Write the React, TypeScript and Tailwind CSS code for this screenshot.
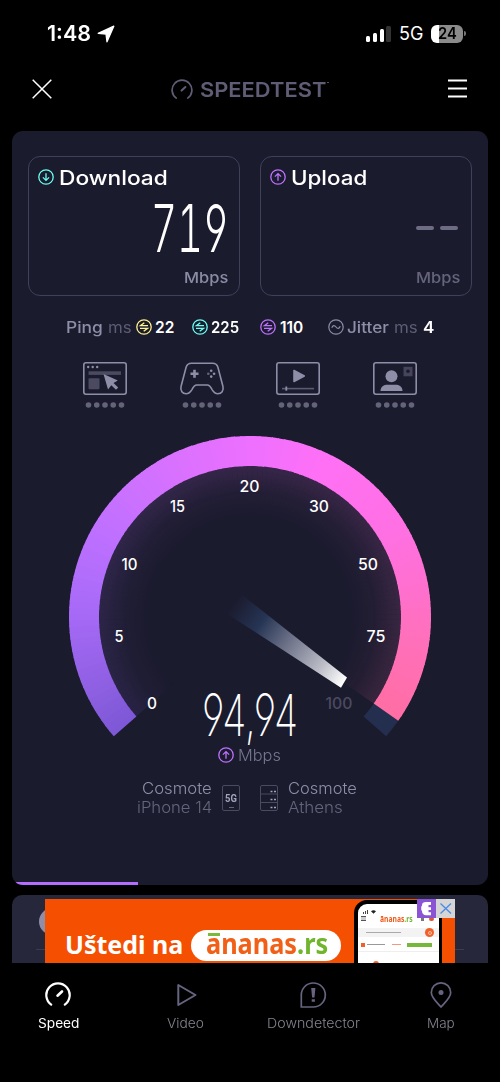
import { useLayoutEffect, useRef, type ReactNode } from "react";

/* Text stretched horizontally so that it fills the width given in className. */
function Fit({ className, children }: { className: string; children: ReactNode }) {
  const box = useRef<HTMLSpanElement>(null);
  const inner = useRef<HTMLSpanElement>(null);
  useLayoutEffect(() => {
    if (!box.current || !inner.current) return;
    const k = box.current.clientWidth / inner.current.offsetWidth;
    inner.current.style.transform = `scaleX(${k})`;
  }, [children]);
  return (
    <span className={`block shrink-0 whitespace-nowrap ${className}`}>
      <span ref={box} className="block w-full">
        <span ref={inner} className="inline-block origin-left">
          {children}
        </span>
      </span>
    </span>
  );
}

function ArrowCircle({ up, className }: { up?: boolean; className: string }) {
  return (
    <svg viewBox="0 0 16 16" fill="none" stroke="currentColor" strokeWidth="1.3" className={`size-4 shrink-0 ${className}`}>
      <circle cx="8" cy="8" r="7.2" />
      <path d={up ? "M8 11.8V4.8M4.9 7.6 8 4.6l3.1 3" : "M8 4.2v7M4.9 8.4 8 11.4l3.1-3"} />
    </svg>
  );
}

function PingIcon({ className }: { className: string }) {
  return (
    <svg viewBox="0 0 16 16" fill="none" stroke="currentColor" strokeWidth="1.3" className={`size-4 shrink-0 ${className}`}>
      <circle cx="8" cy="8" r="7.2" />
      <path d="M12 6.7H4.4L8.3 3.7M4 9.3h7.6L7.7 12.3" />
    </svg>
  );
}

function Dots() {
  return (
    <svg viewBox="0 0 40 6" className="mt-[7.500px] h-[6px] w-[40px]" fill="#646379">
      {[0, 1, 2, 3, 4].map((i) => (
        <circle key={i} cx={3.5 + i * 8.25} cy="3" r="2.8" />
      ))}
    </svg>
  );
}

const experiences: ReactNode[] = [
  <g key="web">
    <rect x="0.8" y="0.8" width="42.4" height="31.4" rx="2.2" />
    <g fill="#8f8ea8" stroke="none">
      <circle cx="5.2" cy="5" r="1.2" />
      <circle cx="9.7" cy="5" r="1.2" />
      <circle cx="14.2" cy="5" r="1.2" />
      <rect x="5.5" y="9.3" width="32.5" height="3.6" fill="#4b4a60" />
      <rect x="5.5" y="16.3" width="11" height="11" rx="1" fill="#4b4a60" />
      <path d="M20.5 12 25 27.500l3.300-4.200 4.700 4.500 2.200-2.200-4.700-4.600 4.300-2.600z" />
    </g>
  </g>,
  <g key="games">
    <path d="M11.5 1.2h21c3 0 4.7 1.5 5.4 4l5 19c1.2 4.5-1.5 7.600-5 7.600-3 0-4.500-2-6-4.500-1.300-2.300-2-4.300-4.500-4.300H16.600c-2.500 0-3.200 2-4.500 4.300-1.500 2.500-3 4.500-6 4.500-3.500 0-6.200-3.100-5-7.600l5-19c.7-2.500 2.400-4 5.400-4z" />
    <path d="M14.500 7.800v8M10.500 11.800h8" strokeWidth="2.600" />
    <g fill="#8f8ea8" stroke="none">
      <circle cx="31.200" cy="8.800" r="1.300" />
      <circle cx="31.200" cy="14.600" r="1.300" />
      <circle cx="28.300" cy="11.700" r="1.300" fill="#65647b" />
      <circle cx="34.100" cy="11.700" r="1.300" />
    </g>
  </g>,
  <g key="video">
    <rect x="0.8" y="0.8" width="42.400" height="31.400" rx="2.200" />
    <path d="M18 8.500v11l10.300-5.500z" fill="#8f8ea8" />
    <path d="M6 26.600h32" strokeWidth="1.600" stroke="#5c5b72" />
    <path d="M10.300 24.500v4.200" strokeWidth="1.800" />
  </g>,
  <g key="calls">
    <rect x="0.8" y="0.8" width="42.400" height="31.400" rx="2.200" />
    <g fill="#8f8ea8" stroke="none">
      <circle cx="18.500" cy="14.200" r="6" />
      <path d="M7.500 29c0-4.500 3.500-6.300 7-6.300h8c3.500 0 7 1.800 7 6.300z" />
      <rect x="30.500" y="4.800" width="9" height="9.500" fill="#45445a" />
      <circle cx="35" cy="9.300" r="1.800" fill="#1b1b2e" />
    </g>
  </g>,
];

const CX = 250;
const CY = 617;
const START = -131.2;
const END = 125;
const stops: [number, number[]][] = [
  [-131.2, [126, 88, 214]],
  [-110, [148, 98, 230]],
  [-88, [168, 106, 248]],
  [-62, [190, 112, 255]],
  [-35, [211, 113, 255]],
  [0, [238, 112, 255]],
  [25, [255, 112, 245]],
  [60, [255, 112, 226]],
  [92, [255, 112, 192]],
  [125, [255, 110, 162]],
];

function colorAt(a: number) {
  for (let i = 1; i < stops.length; i++) {
    const [a0, c0] = stops[i - 1];
    const [a1, c1] = stops[i];
    if (a <= a1) {
      const t = (a - a0) / (a1 - a0);
      return `rgb(${c0.map((v, k) => Math.round(v + (c1[k] - v) * t)).join(",")})`;
    }
  }
  return "rgb(255,110,162)";
}

function sector(a0: number, a1: number, r0: number, r1: number) {
  const p = (a: number, r: number) => {
    const t = (a * Math.PI) / 180;
    return `${(CX + r * Math.sin(t)).toFixed(2)} ${(CY - r * Math.cos(t)).toFixed(2)}`;
  };
  return `M${p(a0, r1)}A${r1} ${r1} 0 0 1 ${p(a1, r1)}L${p(a1, r0)}A${r0} ${r0} 0 0 0 ${p(a0, r0)}Z`;
}

const COUNT = 128;
const STEP = (END - START) / COUNT;
const slices = Array.from({ length: COUNT }, (_, i) => START + i * STEP);

const ticks: [string, number, number, number][] = [
  ["0", 152, 704, 10],
  ["5", 119, 637, 9],
  ["10", 129.5, 564.5, 16],
  ["15", 177.5, 506.5, 15],
  ["20", 249.5, 487, 20],
  ["30", 319, 506.5, 20],
  ["50", 368, 564.5, 20],
  ["75", 376, 637, 19],
  ["100", 339, 704, 27],
];

function Gauge() {
  return (
    <svg viewBox="50 430 400 315" className="h-[315px] w-[400px] overflow-visible">
      <defs>
        <radialGradient id="fade" gradientUnits="userSpaceOnUse" cx={CX} cy={CY} r="152">
          <stop offset="0.66" stopColor="#fff" stopOpacity="0" />
          <stop offset="0.82" stopColor="#fff" stopOpacity="0.04" />
          <stop offset="1" stopColor="#fff" stopOpacity="0.14" />
        </radialGradient>
        <mask id="glow">
          <rect x="50" y="430" width="400" height="315" fill="url(#fade)" />
        </mask>
        <linearGradient id="needle" gradientUnits="userSpaceOnUse" x1="233" y1="604" x2="344" y2="682">
          <stop offset="0" stopColor="#243353" stopOpacity="0" />
          <stop offset="0.25" stopColor="#263554" />
          <stop offset="0.5" stopColor="#6e7389" />
          <stop offset="0.8" stopColor="#bcbdc7" />
          <stop offset="1" stopColor="#fff" />
        </linearGradient>
      </defs>
      <g mask="url(#glow)">
        {slices.map((a) => (
          <path key={a} d={sector(a, Math.min(a + STEP + 0.1, END), 90, 152)} fill={colorAt(a)} />
        ))}
      </g>
      <path d={sector(124.8, 131.2, 151, 181)} fill="#242e4e" />
      {slices.map((a) => (
        <path key={a} d={sector(a, Math.min(a + STEP + 0.4, END), 151, 181)} fill={colorAt(a)} />
      ))}
      <path d="M241.500 594.500 347 677.500 341 687.700 226.500 613.500z" fill="url(#needle)" />
      <g fontFamily="Inter, 'Liberation Sans', sans-serif" fontSize="15.5" fontWeight="550" textAnchor="middle">
        {ticks.map(([t, x, y, w]) => (
          <text key={t} x={x} y={y + 5.3} textLength={w} lengthAdjust="spacingAndGlyphs" fill={t === "100" ? "#4b4a5f" : "#fff"}>
            {t}
          </text>
        ))}
      </g>
      <text
        x="250"
        y="735.5"
        fontSize="58"
        fontWeight="200"
        textAnchor="middle"
        textLength="96"
        lengthAdjust="spacingAndGlyphs"
        fill="#fff"
        className="font-[Inter,sans-serif] [font-feature-settings:'cv04']"
      >
        94,94
      </text>
    </svg>
  );
}

function SpeedIcon({ className, width }: { className: string; width: number }) {
  return (
    <svg viewBox="0 0 26 26" fill="none" stroke="currentColor" strokeWidth={width} strokeLinecap="round" className={className}>
      <path d="M6.200 22.600A11.700 11.700 0 1 1 19.800 22.600" />
      <path d="M12.500 13.700 17 9.500" strokeWidth={width + 0.4} />
    </svg>
  );
}

function Ad() {
  return (
    <div className="relative h-[68px] overflow-hidden rounded-t-[10px] bg-[#26273b]">
      <div className="absolute top-[13px] left-[27px] size-[27px] rounded-full bg-[#8f8ea6]" />
      <div className="absolute top-[54px] left-[24px] h-px w-[428px] bg-[#3c3c50]" />
      <div className="absolute top-[3.500px] left-[33px] flex h-[65px] w-[410px] overflow-hidden bg-[#f54f02]">
        <Fit className="mt-[29px] ml-[20px] w-[118px] font-['Noto_Sans'] text-[25px] leading-[32px] font-bold text-white">Uštedi na</Fit>
        <div className="mt-[31px] ml-[8px] h-[31.500px] w-[149.500px] rounded-full bg-white pl-[15px]">
          <div className="relative -top-[3px]">
            <Fit className="w-[122px] font-['Noto_Sans'] text-[28px] leading-[32px] font-bold text-[#f26018]">
              ānanas<span className="text-[#70b52c]">.rs</span>
            </Fit>
            <span className="absolute top-[3px] left-px h-[6px] w-[15px] bg-white" />
            <span className="absolute top-[6px] left-[2px] h-[3px] w-[12px] bg-[#7ab93a]" />
          </div>
        </div>
        <div className="mt-[1.500px] ml-[13.500px] h-[90px] w-[88px] rounded-[13px] border-[4px] border-r-[3px] border-black bg-white">
          <div className="mt-[4px] ml-[5px] flex h-[6px] items-end gap-px">
            <i className="h-[2px] w-px bg-[#444]" />
            <i className="h-[3px] w-px bg-[#444]" />
            <i className="h-[4px] w-px bg-[#444]" />
            <svg viewBox="0 0 6 4" className="ml-[2px] h-[4px] w-[5px]"><path d="M0 1Q3-1 6 1L3 4z" fill="#222" /></svg>
          </div>
          <div className="flex h-[9px] items-center pl-[3px]">
            <span className="h-[5px] w-[5px] border-y border-[#555] bg-[#ccc]" />
            <Fit className="ml-[14px] w-[33px] font-['Noto_Sans'] text-[8px] leading-[9px] font-bold text-[#f05a1a]">
              ānanas<span className="text-[#70b52c]">.rs</span>
            </Fit>
            <span className="ml-[8px] h-[4px] w-[3px] bg-[#777]" />
            <span className="ml-[5px] h-[4px] w-[5px] rounded-sm bg-[#d85a3a]" />
          </div>
          <div className="mt-[5px] flex h-[9px] items-center bg-[#f3f3f3]">
            <span className="ml-[8px] h-px w-[35px] bg-[#aaa]" />
            <span className="ml-[24px] flex size-[9px] items-center justify-center rounded-full bg-[#f2602a]">
              <span className="size-[4px] rounded-full border border-[#ffc0a5]" />
            </span>
          </div>
          <div className="mt-[4px] flex h-[7px] items-center">
            <span className="ml-[3px] size-[4px] bg-[#f2602a]" />
            <span className="ml-[2px] h-px w-[18px] bg-[#999]" />
            <span className="ml-[7px] h-[1.500px] w-[9px] bg-[#f09a80]" />
            <span className="ml-[6px] h-[4px] w-[25px] bg-[#76b83a]" />
          </div>
          <div className="mt-[3px] h-px bg-[#eee]" />
          <div className="mt-[9px] ml-[15px] size-[6px] rounded-t-full bg-[#f2602a]" />
        </div>
      </div>
      <div className="absolute top-[3.500px] left-[405px] flex">
        <svg viewBox="0 0 19 19" className="size-[19px] bg-[#8a54d4]">
          <path d="M14 3H9C6.500 3 5 4.200 5 6.200c0 .7-.8 1.100-.8 2.100v1.900c0 1 .8 1.400.8 2.100 0 2.400 1.500 3.900 4 3.900h5v-3h-2.500v-2.200H14V8.200h-2.500V6H14z" fill="#fff" />
        </svg>
        <svg viewBox="0 0 19 19" className="size-[19px] bg-[#d5d5d6]">
          <path d="M4.500 4.500 15 14.500M15 4.500 4.500 14.500" stroke="#4b8ae8" strokeWidth="1.300" />
        </svg>
      </div>
    </div>
  );
}

const tabs: { label: string; width: string; icon: ReactNode; active?: boolean }[] = [
  { label: "Speed", width: "w-[41px]", active: true, icon: <SpeedIcon className="my-px size-[26px] text-white" width={2.2} /> },
  {
    label: "Video",
    width: "w-[37px]",
    icon: (
      <svg viewBox="0 0 28 28" className="size-7 fill-none stroke-[#66647f]" strokeWidth="2" strokeLinejoin="round">
        <path d="M6.300 4v20L23.500 14z" />
      </svg>
    ),
  },
  {
    label: "Downdetector",
    width: "w-[93px]",
    icon: (
      <svg viewBox="0 0 28 28" className="size-7 fill-none stroke-[#66647f]" strokeWidth="1.700">
        <path d="M2.300 26V14A12 12 0 1 1 14.300 26z" />
        <path d="M12.200 7h4.200l-.9 9.500h-2.400zM12.700 18.300h3.200v2.500h-3.200z" fill="#66647f" stroke="none" />
      </svg>
    ),
  },
  {
    label: "Map",
    width: "w-[28px]",
    icon: (
      <svg viewBox="0 0 28 28" className="size-7 fill-none stroke-[#66647f]" strokeWidth="1.700">
        <path d="M14 26C9 20.500 4.300 16.500 4.300 11.500a9.700 9.700 0 0 1 19.400 0c0 5-4.700 9-9.700 14.500z" />
        <circle cx="14" cy="11.500" r="2.500" fill="#66647f" stroke="none" />
      </svg>
    ),
  },
];

export default function App() {
  return (
    <div className="flex h-[1082px] w-[500px] flex-col overflow-hidden bg-black font-[Inter,'Liberation_Sans',sans-serif] text-white">
      <div className="flex h-[67px] shrink-0 items-center pl-[47px]">
        <Fit className="w-[44px] text-[21px] leading-6 font-semibold">1:48</Fit>
        <svg viewBox="0 0 18 18" className="ml-[6px] size-[18px]">
          <path d="M1.200 8.300 16.800 1.200 10 16.800 9 9z" fill="#fff" stroke="#fff" strokeWidth="1.300" strokeLinejoin="round" />
        </svg>
        <div className="ml-[251px] flex h-4 w-[25px] items-end gap-[2.500px]">
          <span className="h-[6px] w-[4.300px] rounded-[1.500px] bg-white" />
          <span className="h-[9px] w-[4.300px] rounded-[1.500px] bg-white" />
          <span className="h-[12.500px] w-[4.300px] rounded-[1.500px] bg-white" />
          <span className="h-[16px] w-[4.300px] rounded-[1.500px] bg-[#333]" />
        </div>
        <Fit className="ml-[8px] w-[24px] text-[18px] leading-6">5G</Fit>
        <div className="ml-[8px] flex h-[18px] w-[32px] items-center overflow-hidden rounded-[6px] bg-gradient-to-r from-white from-[24%] to-[#8b8b8b] to-[24%] pl-[6.500px]">
          <Fit className="w-[19px] text-[15.500px] leading-[18px] font-semibold text-black">24</Fit>
        </div>
        <span className="ml-px h-[5px] w-[2px] rounded-r bg-[#777]" />
      </div>

      <div className="flex h-[43px] shrink-0 items-center pr-[33px] pl-[32px]">
        <svg viewBox="0 0 20 20" className="size-5" stroke="#fff" strokeWidth="1.500"><path d="M.7.7l18.600 18.600M19.300.7.7 19.300" /></svg>
        <SpeedIcon className="mt-[2px] ml-[119px] size-[22px] text-[#5f5c75]" width={2} />
        <Fit className="mt-[2px] ml-[7px] w-[126px] text-[20.500px] leading-6 font-semibold text-[#5f5c75]">SPEEDTEST</Fit>
        <span className="mb-[12px] ml-px size-[1.500px] rounded-full bg-[#5f5c75]" />
        <svg viewBox="0 0 19 20" className="ml-auto h-5 w-[19px]" stroke="#fff" strokeWidth="1.800"><path d="M0 1.500h19M0 9.500h19M0 17.500h19" /></svg>
      </div>

      <main className="relative mx-[12px] mt-[21px] flex h-[754px] shrink-0 flex-col overflow-hidden rounded-[11px] bg-[#1b1b2e]">
        <div className="mt-[25px] flex gap-5 px-4">
          <section className="flex h-[140px] w-[212px] flex-col rounded-[12px] border-[1.500px] border-[#40405a] pr-[11px] pl-[9px]">
            <div className="flex h-10 items-center">
              <ArrowCircle className="text-[#6afff3]" />
              <Fit className="mt-px ml-[5px] w-[109px] text-[20px] leading-6 font-medium">Download</Fit>
            </div>
            <Fit className="-mr-px ml-auto w-[78px] text-[66px] leading-[62px] font-light [font-feature-settings:'cv04','tnum']">719</Fit>
            <Fit className="mt-[9px] ml-auto w-[44px] text-[15px] leading-5 font-medium text-[#8c8ba6]">Mbps</Fit>
          </section>
          <section className="flex h-[140px] w-[212px] flex-col rounded-[12px] border-[1.500px] border-[#40405a] pr-[11px] pl-[9px]">
            <div className="flex h-10 items-center">
              <ArrowCircle up className="text-[#bf71ff]" />
              <Fit className="mt-px ml-[5px] w-[76px] text-[20px] leading-6 font-medium">Upload</Fit>
            </div>
            <div className="flex h-[62px] items-center justify-end gap-[6px] pr-[2px]">
              <span className="h-[3.500px] w-[18px] rounded-sm bg-[#6d6c84]" />
              <span className="h-[3.500px] w-[18px] rounded-sm bg-[#6d6c84]" />
            </div>
            <Fit className="mt-[9px] ml-auto w-[44px] text-[15px] leading-5 font-medium text-[#65647b]">Mbps</Fit>
          </section>
        </div>

        <div className="mt-[21px] flex h-5 items-center pl-[54px] text-[15.500px] leading-5 font-semibold">
          <Fit className="mt-px w-[37px] font-medium text-[#8f8ea8]">Ping</Fit>
          <Fit className="mt-px ml-[5px] w-[24px] font-normal text-[#5d5c72]">ms</Fit>
          <PingIcon className="ml-[4px] text-[#fff38e]" />
          <Fit className="mt-px ml-[3px] w-[19px]">22</Fit>
          <PingIcon className="ml-[18px] text-[#6afff3]" />
          <Fit className="mt-px ml-[3px] w-[28px]">225</Fit>
          <PingIcon className="ml-[21px] text-[#bf71ff]" />
          <Fit className="mt-px ml-[4px] w-[23px]">110</Fit>
          <svg viewBox="0 0 16 16" fill="none" stroke="#8f8ea8" strokeWidth="1.200" className="ml-[25px] size-4 shrink-0">
            <circle cx="8" cy="8" r="7.200" />
            <path d="M3.800 8.800C4.800 6 6.500 6 8 8s3.200 2 4.200-.8" />
          </svg>
          <Fit className="mt-px ml-[3px] w-[42px] font-medium text-[#8f8ea8]">Jitter</Fit>
          <Fit className="mt-px ml-[5px] w-[24px] font-normal text-[#5d5c72]">ms</Fit>
          <Fit className="mt-px ml-[5px] w-[11px]">4</Fit>
        </div>

        <div className="mt-[24.500px] flex gap-[52.700px] pl-[71px]">
          {experiences.map((icon, i) => (
            <div key={i} className="flex flex-col items-center">
              <svg viewBox="0 0 44 33" className="h-[33px] w-[44px] overflow-visible" fill="none" stroke="#8f8ea8" strokeWidth="1.600" strokeLinejoin="round">
                {icon}
              </svg>
              <Dots />
            </div>
          ))}
        </div>

        <div className="mt-[22px] flex h-[315px] justify-center">
          <Gauge />
        </div>

        <div className="flex h-5 items-center pl-[206px]">
          <ArrowCircle up className="text-[#bf71ff]" />
          <Fit className="ml-[4px] w-[43px] text-[16px] leading-5 font-light text-[#77768f]">Mbps</Fit>
        </div>

        <div className="mt-[14px] flex h-[38px] items-center text-[16px] leading-[19px] font-light">
          <div className="flex w-[200px] flex-col items-end">
            <Fit className="w-[70px] text-[#8f8ea8]">Cosmote</Fit>
            <Fit className="w-[75px] text-[#65647b]">iPhone 14</Fit>
          </div>
          <div className="ml-[10px] flex h-[26px] w-[18px] flex-col items-center rounded-[2px] border border-[#4b4a60]">
            <Fit className="mt-[6px] w-[12px] font-[Roboto] text-[11px] leading-[13px] font-bold text-[#a5a4bb]">5G</Fit>
            <span className="mt-[2px] h-px w-[5px] bg-[#65647b]" />
          </div>
          <svg viewBox="0 0 18 26" className="ml-[20px] h-[26px] w-[18px]" fill="none" stroke="#4b4a60">
            <rect x=".5" y=".5" width="17" height="25" rx="1.500" />
            <path d="M.5 9h17M.5 17.500h17" />
            <path d="M10.500 6.500h2M14 6.500h2M10.500 14.500h2M14 14.500h2M10.500 22.500h2M14 22.500h2" stroke="#a5a4bb" strokeWidth="1.600" />
          </svg>
          <div className="ml-[10px]">
            <Fit className="w-[69px] text-[#8f8ea8]">Cosmote</Fit>
            <Fit className="w-[55px] text-[#65647b]">Athens</Fit>
          </div>
        </div>
        <div className="mt-auto h-[3px] w-[126px] bg-[#b46cff]" />
      </main>

      <div className="mx-[12px] mt-[10px] shrink-0">
        <Ad />
      </div>

      <nav className="-mx-[5.500px] mt-[18px] grid w-[510px] shrink-0 grid-cols-4">
        {tabs.map((t) => (
          <div key={t.label} className={`flex flex-col items-center ${t.active ? "text-white" : "text-[#85848f]"}`}>
            {t.icon}
            <Fit className={`mt-[4px] text-[13px] leading-5 ${t.width} ${t.active ? "font-normal" : "font-light"}`}>{t.label}</Fit>
          </div>
        ))}
      </nav>
    </div>
  );
}
